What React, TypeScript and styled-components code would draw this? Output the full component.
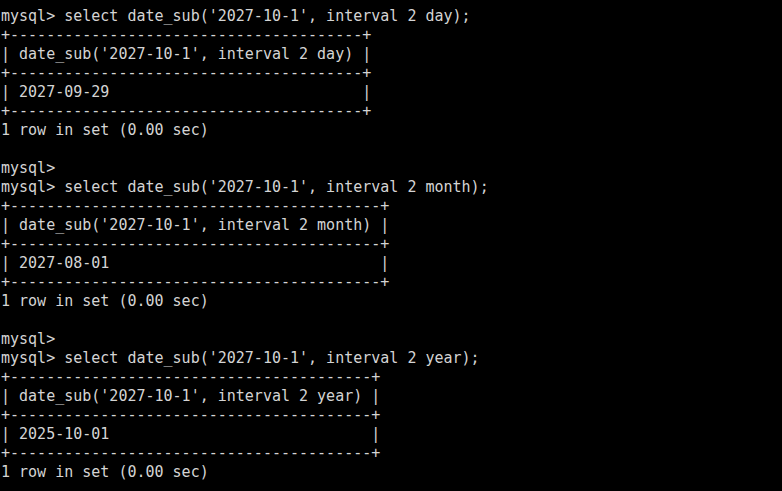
import React from "react";
import styled, { createGlobalStyle } from "styled-components";

const Global = createGlobalStyle`
  html, body { margin: 0; padding: 0; background: #000; }
  #root { min-height: 491px; }
`;

const Terminal = styled.div`
  background: #000;
  width: 782px;
  height: 491px;
  overflow: hidden;
  padding: 7px 0 0 1px;
  box-sizing: border-box;
`;

const Line = styled.pre`
  margin: 0;
  font-family: "DejaVu Sans Mono", monospace;
  font-size: 15px;
  line-height: 19px;
  height: 19px;
  color: #d4d4d4;
  white-space: pre;
`;

const block = (unit: string, result: string): string[] => {
  const header = `date_sub('2027-10-1', interval 2 ${unit})`;
  const border = "+" + "-".repeat(header.length + 2) + "+";
  return [
    `mysql> select ${header};`,
    border,
    `| ${header} |`,
    border,
    `| ${result.padEnd(header.length)} |`,
    border,
    "1 row in set (0.00 sec)",
  ];
};

const lines: string[] = [
  ...block("day", "2027-09-29"),
  "",
  "mysql>",
  ...block("month", "2027-08-01"),
  "",
  "mysql>",
  ...block("year", "2025-10-01"),
];

export default function App() {
  return (
    <>
      <Global />
      <Terminal>
        {lines.map((l, i) => (
          <Line key={i}>{l || " "}</Line>
        ))}
      </Terminal>
    </>
  );
}
